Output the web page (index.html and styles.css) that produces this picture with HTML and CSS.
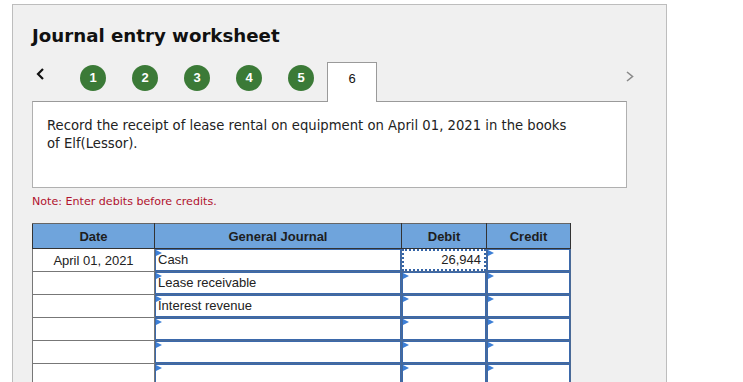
FILE: index.html
```html
<!DOCTYPE html>
<html>
<head>
<meta charset="utf-8">
<link rel="stylesheet" href="styles.css">
</head>
<body>
<div class="panel">
  <h1 class="title">Journal entry worksheet</h1>
  <div class="nav">
    <svg class="arrow prev" width="8" height="12" viewBox="0 0 8 12"><path d="M7 1 L2 6 L7 11" fill="none" stroke="#111" stroke-width="2.2"/></svg>
    <div class="steps">
      <span class="step">1</span>
      <span class="step">2</span>
      <span class="step">3</span>
      <span class="step">4</span>
      <span class="step">5</span>
    </div>
    <div class="tab">6</div>
    <svg class="arrow next" width="8" height="11" viewBox="0 0 8 11"><path d="M1 1 L6.5 5.5 L1 10" fill="none" stroke="#8a8a8a" stroke-width="1.6"/></svg>
  </div>
  <div class="question">Record the receipt of lease rental on equipment on April 01, 2021 in the books of Elf(Lessor).</div>
  <p class="note">Note: Enter debits before credits.</p>
  <table class="journal">
    <colgroup>
      <col class="c-date"><col class="c-gj"><col class="c-dr"><col class="c-cr">
    </colgroup>
    <thead>
      <tr><th>Date</th><th>General Journal</th><th>Debit</th><th>Credit</th></tr>
    </thead>
    <tbody>
      <tr><td class="date">April 01, 2021</td><td class="in"><div class="field">Cash</div></td><td class="in"><div class="field num focused">26,944</div></td><td class="in"><div class="field flag"></div></td></tr>
      <tr><td class="date"></td><td class="in"><div class="field flag">Lease receivable</div></td><td class="in"><div class="field flag"></div></td><td class="in"><div class="field flag"></div></td></tr>
      <tr><td class="date"></td><td class="in"><div class="field flag">Interest revenue</div></td><td class="in"><div class="field flag"></div></td><td class="in"><div class="field flag"></div></td></tr>
      <tr><td class="date"></td><td class="in"><div class="field flag"></div></td><td class="in"><div class="field flag"></div></td><td class="in"><div class="field flag"></div></td></tr>
      <tr><td class="date"></td><td class="in"><div class="field flag"></div></td><td class="in"><div class="field flag"></div></td><td class="in"><div class="field flag"></div></td></tr>
      <tr><td class="date"></td><td class="in"><div class="field flag"></div></td><td class="in"><div class="field flag"></div></td><td class="in"><div class="field flag"></div></td></tr>
      <tr><td class="date"></td><td class="in"><div class="field flag"></div></td><td class="in"><div class="field flag"></div></td><td class="in"><div class="field flag"></div></td></tr>
    </tbody>
  </table>
</div>
</body>
</html>
```
FILE: styles.css
```css
html, body {
  margin: 0;
  padding: 0;
  background: #ffffff;
}
.panel {
  margin: 4px 0 0 12px;
  width: 595px;
  min-height: 420px;
  padding: 0 39px 0 19px;
  background: #f0f0f0;
  border: 1px solid #bdbdbd;
  border-bottom: none;
  font-family: "DejaVu Sans", Verdana, sans-serif;
}
.title {
  margin: 21px 0 16px 0;
  font-size: 18.2px;
  line-height: 20px;
  font-weight: bold;
  color: #111;
}
.nav {
  display: flex;
  align-items: flex-start;
  height: 39px;
  margin-right: -7px;
}
.arrow.prev {
  margin: 6px 0 0 4px;
}
.steps {
  display: flex;
  gap: 26px;
  margin: 3px 0 0 36px;
}
.step {
  width: 26px;
  height: 26px;
  border-radius: 50%;
  background: #3b7a37;
  color: #fff;
  font: bold 13px/26px "Liberation Sans", Arial, sans-serif;
  text-align: center;
}
.tab {
  position: relative;
  z-index: 1;
  margin-left: 13px;
  width: 48px;
  height: 39px;
  background: #fff;
  border: 1px solid #9a9a9a;
  border-bottom: none;
  font: 13px/31px "Liberation Sans", Arial, sans-serif;
  text-align: center;
  color: #111;
}
.arrow.next {
  margin: 9px 0 0 auto;
}
.question {
  box-sizing: border-box;
  height: 87px;
  padding: 15px 50px 0 14px;
  background: #fff;
  border: 1px solid #b0b0b0;
  border-top-color: #9a9a9a;
  font-size: 13.2px;
  line-height: 18px;
  color: #222;
}
.note {
  margin: 7px 0 14px 0;
  font-size: 11.1px;
  line-height: 14px;
  color: #b0122e;
}
.journal {
  border-collapse: collapse;
  table-layout: fixed;
  width: 538px;
  font-family: "Liberation Sans", Arial, sans-serif;
  font-size: 13px;
  color: #222;
}
.c-date { width: 122px; }
.c-gj { width: 247px; }
.c-dr { width: 85px; }
.c-cr { width: 84px; }
.journal th {
  height: 24px;
  padding: 0;
  background: #6fa4dc;
  border: 1px solid #333;
  border-top-color: #666;
  font-weight: bold;
  color: #1e1e1e;
  text-align: center;
}
.journal td {
  padding: 0;
  height: 22px;
  background: #fff;
}
.journal td.date {
  border: 1px solid #777;
  text-align: center;
}
.journal td.in {
  border: 1px solid #4a6a97;
}
.field {
  position: relative;
  box-sizing: border-box;
  height: 22px;
  padding: 0 2px;
  border: 1px solid #3b69ab;
  line-height: 20px;
  white-space: nowrap;
  overflow: visible;
}
.field.flag::before,
.field:first-child::before {
  content: "";
  position: absolute;
  left: 0;
  top: 0;
  width: 0;
  height: 0;
  border-left: 6px solid #3d7fd6;
  border-top: 3.5px solid transparent;
  border-bottom: 3.5px solid transparent;
}
.field.focused {
  border: 2px dotted #3565a8;
  text-align: right;
  padding-right: 3px;
  line-height: 18px;
}
.field.focused::before {
  display: none;
}
```
